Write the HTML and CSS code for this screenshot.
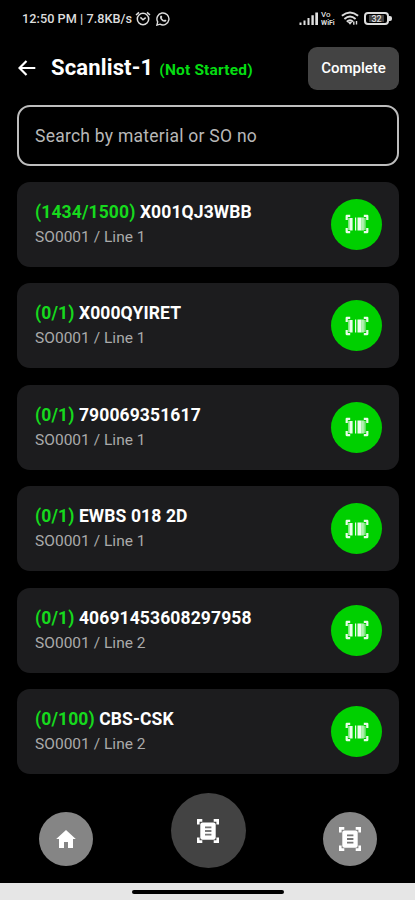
FILE: index.html
```html
<!DOCTYPE html>
<html lang="en">
<head>
<meta charset="utf-8">
<title>Scanlist-1</title>
<link rel="stylesheet" href="styles.css">
</head>
<body>
<svg class="defs" width="0" height="0" aria-hidden="true">
  <symbol id="barcode" viewBox="0 0 24 20">
    <path d="M5.2 1.9H1.7V6M18.8 1.9h3.5V6M5.2 18.1H1.7V14M18.8 18.1h3.5V14" fill="none" stroke="#fff" stroke-opacity=".92" stroke-width="2.2" stroke-linejoin="round"/>
    <path d="M4.9 4h2.7v12.5H4.9zM10 3.5h1.2v13H10zM12.5 3.5h4v13h-4z" fill="#fff" opacity=".92"/>
    <path d="M3.3 4h1.6v12H3.3zM16.5 3.5h2.4v13h-2.4z" fill="#fff" opacity=".7"/>
    <path d="M18.9 4h1.8v12h-1.8z" fill="#fff" opacity=".5"/>
  </symbol>
  <symbol id="document" viewBox="0 0 22 24">
    <path d="M1.3 5.5V1.4h4M16.7 1.4h4v4.1M1.3 18.5v4.1h4M16.7 22.6h4v-4.1" fill="none" stroke="#fff" stroke-width="2.6"/>
    <rect x="3.3" y="3.4" width="15.4" height="17.4" rx="2.2" fill="#fff"/>
    <path class="lines" d="M8 8.4h6.4M8 12h6.4M8 15.6h6.4" stroke-width="1.8"/>
  </symbol>
</svg>
<div class="screen">
  <div class="status">
    <span class="clock">12:50 PM | 7.8KB/s</span>
    <svg class="alarm" width="16" height="15" viewBox="0 0 16 15" fill="none" stroke="#ddd" stroke-width="1.5"><circle cx="8" cy="8" r="5.7"/><path d="M5.4 6.4L8 8.8l2.7-2.2M1 4l3-2.6M15 4l-3-2.6"/></svg>
    <svg class="chat" width="14" height="14" viewBox="0 0 14 14"><path d="M.9 13.1l.8-3.2A6 6 0 1 1 4 12.2z" fill="none" stroke="#ddd" stroke-width="1.4"/><path d="M4.3 4c1-1.3 1.6-.2 2 1l-.6 1c.5 1 1.3 1.7 2.3 2.2l1-.8c1.4.5 2 1 .8 2C7.2 11 3 7 4.3 4z" fill="#ddd"/></svg>
    <span class="spacer"></span>
    <svg class="signal" width="20" height="13" viewBox="0 0 20 13" fill="#e0e0e0"><path d="M.5 10.5h2V13h-2zM4.5 8.5h2V13h-2zM8.5 6h2v7h-2zM12.4 3.3h2.4V13h-2.4zM16.3.5H19V13h-2.7z"/></svg>
    <span class="vowifi"><span>Vo</span><span>WiFi</span></span>
    <svg class="wifi" width="18" height="15" viewBox="0 0 18 15" fill="none" stroke="#ddd" stroke-width="1.9"><path d="M.9 4.8Q9-2 17.1 4.8M3.4 8Q9 3.2 14.6 8M5.8 10.7Q9 7.7 12 10.7"/><path d="M6.5 10.8h5L9 13.8z" fill="#ddd" stroke="none"/><path d="M12.8 10.5v3.3M15.5 10v3.5" stroke-width="1.4"/></svg>
    <span class="battery"><span class="level">32</span></span>
  </div>
  <header class="header">
    <svg class="back" width="18" height="16" viewBox="0 0 18 16" fill="none" stroke="#fff" stroke-width="2.2"><path d="M17.3 8H1.5M8.5 1L1.5 8l7 7"/></svg>
    <h1 class="title">Scanlist-1</h1>
    <span class="state">(Not Started)</span>
    <button class="complete">Complete</button>
  </header>
  <div class="search">Search by material or SO no</div>
  <main class="list">
    <section class="card"><div><p class="item"><span class="count">(1434/1500)</span> X001QJ3WBB</p><p class="line">SO0001 / Line 1</p></div><span class="scan"><svg width="24" height="20"><use href="#barcode"/></svg></span></section>
    <section class="card"><div><p class="item"><span class="count">(0/1)</span> X000QYIRET</p><p class="line">SO0001 / Line 1</p></div><span class="scan"><svg width="24" height="20"><use href="#barcode"/></svg></span></section>
    <section class="card"><div><p class="item"><span class="count">(0/1)</span> 790069351617</p><p class="line">SO0001 / Line 1</p></div><span class="scan"><svg width="24" height="20"><use href="#barcode"/></svg></span></section>
    <section class="card"><div><p class="item"><span class="count">(0/1)</span> EWBS 018 2D</p><p class="line">SO0001 / Line 1</p></div><span class="scan"><svg width="24" height="20"><use href="#barcode"/></svg></span></section>
    <section class="card"><div><p class="item"><span class="count">(0/1)</span> 40691453608297958</p><p class="line">SO0001 / Line 2</p></div><span class="scan"><svg width="24" height="20"><use href="#barcode"/></svg></span></section>
    <section class="card"><div><p class="item"><span class="count">(0/100)</span> CBS-CSK</p><p class="line">SO0001 / Line 2</p></div><span class="scan"><svg width="24" height="20"><use href="#barcode"/></svg></span></section>
  </main>
  <nav class="nav">
    <span class="tab"><svg width="20" height="18" viewBox="0 0 20 18" fill="#fff"><path d="M10 0l9.8 9H17v9h-5v-6H8v6H3V9H.2z"/></svg></span>
    <span class="tab active"><svg width="22" height="24"><use href="#document"/></svg></span>
    <span class="tab"><svg width="22" height="24"><use href="#document"/></svg></span>
  </nav>
  <div class="gesture"><span></span></div>
</div>
</body>
</html>
```
FILE: styles.css
```css
* { box-sizing: border-box; }
body { margin: 0; background: #000; font-family: Roboto, "Liberation Sans", sans-serif; color: #fff; }
.defs { display: block; }
.screen { width: 415px; height: 900px; display: flex; flex-direction: column; overflow: hidden; }
.status { height: 38px; flex: none; display: flex; align-items: center; padding: 0 23px 1px 22px; color: #ddd; }
.clock { font-size: 12.7px; font-weight: 500; letter-spacing: .04px; white-space: nowrap; }
.alarm { margin-left: 3px; }
.chat { margin-left: 5px; }
.spacer { flex: 1; }
.vowifi { display: flex; flex-direction: column; width: 17px; margin-left: 2px; font-size: 8px; line-height: 9px; font-weight: 500; }
.vowifi span + span { font-size: 7px; line-height: 8px; font-weight: 700; }
.wifi { margin-left: 3px; }
.battery { position: relative; display: flex; width: 25px; height: 13px; margin: 0 3px 0 5px; border: 2px solid #ddd; border-radius: 4px; justify-content: center; align-items: center; }
.battery::after { content: ""; position: absolute; right: -5px; top: 2px; width: 3px; height: 5px; background: #ddd; border-radius: 0 2px 2px 0; }
.level { width: 15px; height: 7px; background: #444; font-size: 9px; line-height: 8px; text-align: center; font-weight: 500; }
.header { height: 67px; flex: none; display: flex; align-items: center; padding: 0 16px 7px 18px; }
.header > * { flex: none; }
.title { margin: 0 0 0 15px; font-size: 22px; line-height: 28px; font-weight: 700; letter-spacing: .15px; }
.state { margin: 4px 0 0 6px; font-size: 15.5px; font-weight: 700; letter-spacing: .18px; color: #05dc12; }
.complete { width: 91px; height: 43px; margin-left: auto; padding: 0; border: 0; border-radius: 9px; background: #434343; color: #fff; font: 500 15px Roboto, sans-serif; }
.search { flex: none; height: 61px; margin: 0 16px 0 17px; padding-left: 16px; border: 2px solid #bdbdbd; border-radius: 13px; line-height: 58px; font-size: 17.5px; letter-spacing: .25px; color: #b8b8b8; }
.list { flex: none; display: flex; flex-direction: column; gap: 16.5px; margin: 15.6px 16px 0 17px; }
.card { height: 85px; display: flex; justify-content: space-between; padding: 17px 17px 17px 18px; border-radius: 13px; background: #1c1c1e; }
.item, .line { margin: 0; white-space: nowrap; }
.item { font-size: 17.5px; line-height: 26px; font-weight: 700; letter-spacing: .12px; }
.count { color: #16d91d; }
.line { font-size: 15.5px; line-height: 25.6px; letter-spacing: .02px; color: #aaa; }
.scan { width: 51px; height: 51px; border-radius: 50%; background: #00d000; display: flex; align-items: center; justify-content: center; }
.nav { flex: 1; display: flex; justify-content: space-between; align-items: flex-start; padding: 38px 38px 0 39px; }
.tab { width: 54px; height: 54px; border-radius: 50%; background: #858585; display: flex; align-items: center; justify-content: center; }
.tab.active { width: 75px; height: 75px; margin-top: -19px; background: #434343; }
.lines { stroke: #777; }
.tab.active .lines { stroke: #333; }
.gesture { flex: none; height: 17px; background: #e6e6e6; display: flex; justify-content: center; padding-top: 7px; }
.gesture span { width: 152px; height: 4px; border-radius: 2px; background: #000; }
```
